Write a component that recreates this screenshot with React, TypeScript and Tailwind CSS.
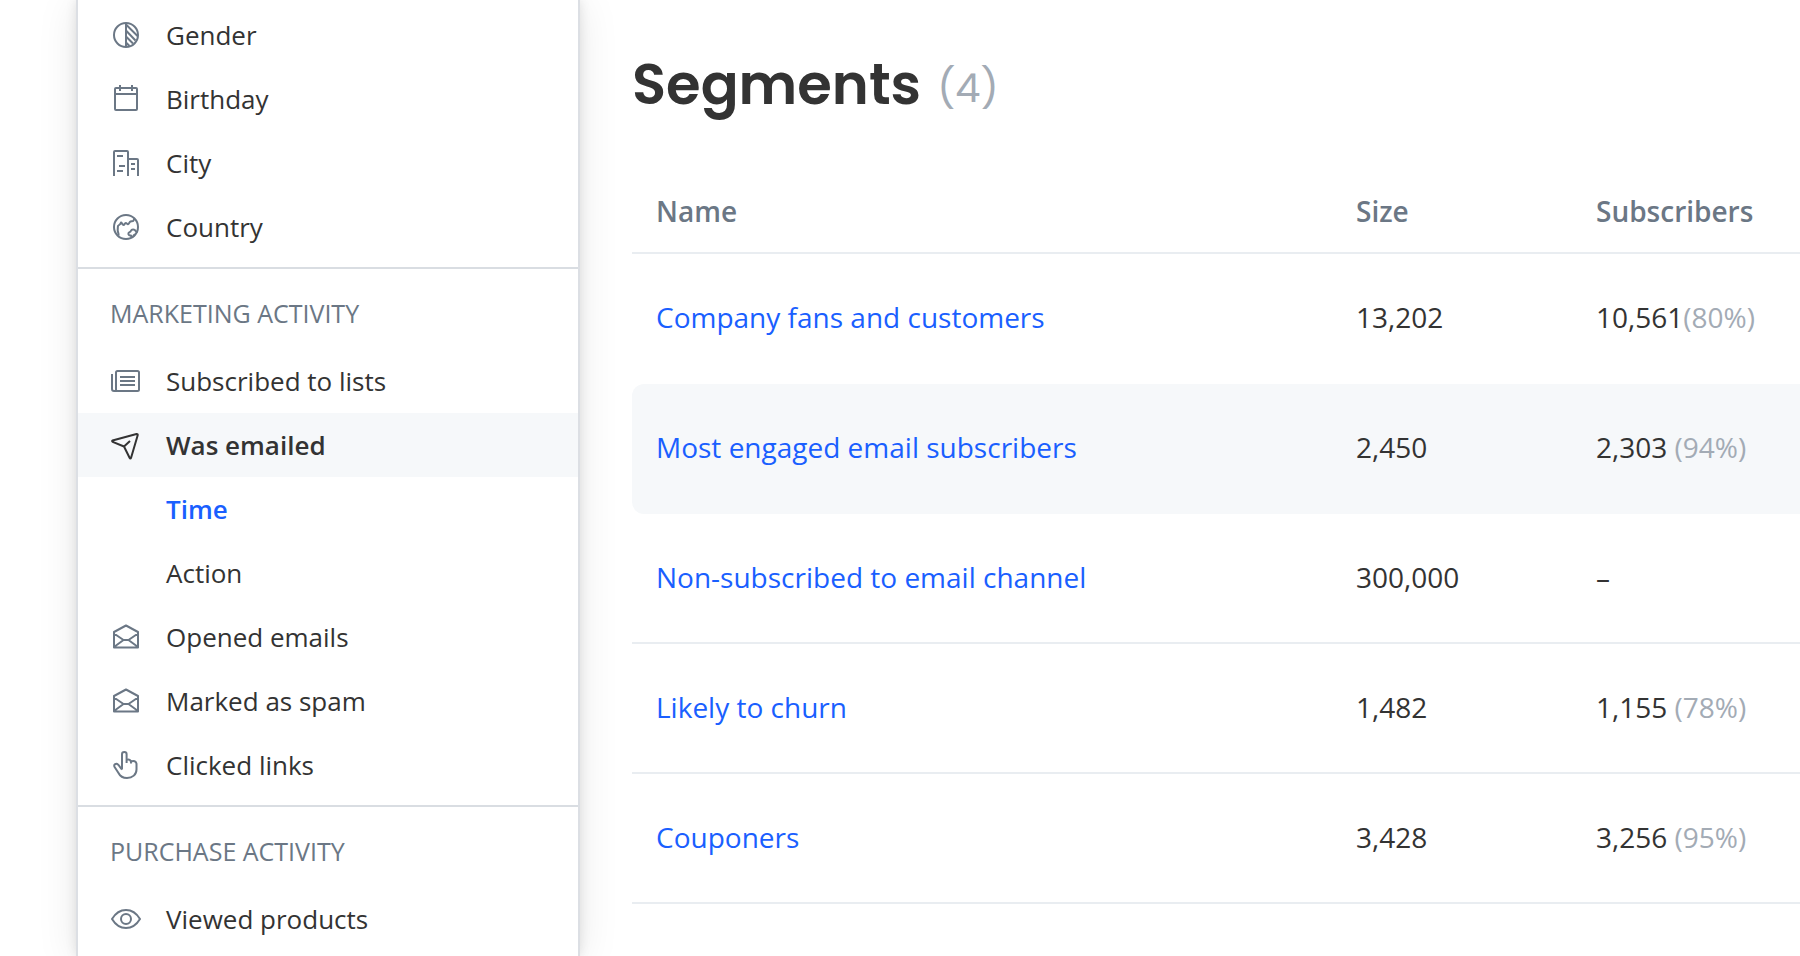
import type { ReactNode } from "react";

function Icon({ children }: { children: ReactNode }) {
  return (
    <svg
      viewBox="0 0 32 32"
      className="size-8 shrink-0"
      fill="none"
      stroke="currentColor"
      strokeWidth="2"
      strokeLinejoin="round"
      aria-hidden="true"
    >
      {children}
    </svg>
  );
}

const GenderIcon = () => (
  <Icon>
    <circle cx="16" cy="16" r="12" />
    <path d="M16 4v24M16 5.500 27.500 17M16 11.500 25.500 21.500M16 17.500l7 7M16 23.500l3.500 3.500" />
  </Icon>
);

const CalendarIcon = () => (
  <Icon>
    <rect x="5" y="5" width="22" height="22" rx="1" />
    <path d="M5 11h22M10 2v6M22 2v6" />
  </Icon>
);

const CityIcon = () => (
  <Icon>
    <path d="M4 29V5a1 1 0 0 1 1-1h12a1 1 0 0 1 1 1v24M18 12h9a1 1 0 0 1 1 1v16M7 9h6M9 19h6M7 24h6M21 17h4M21 22h4" />
  </Icon>
);

const GlobeIcon = () => (
  <Icon>
    <circle cx="16" cy="16" r="12" />
    <path d="M8.500 24.500c.5-2.500-1-3.500-.8-5.500.2-1.500 0-3 .3-4 .5-1.200 2.500-1 3-3.500 1.200.5 1.300 2.500 2.500 2.500s1-2 2.200-2 1.300 1.300 2.300 1.200c1.500-.2 1-2.200 2.500-2.700l2.500-.500c1-.5.7-2 2-2.500" />
    <path d="M21.500 26.500l-.5-2c-2 .3-3-1-2.500-2.500.4-1 2-.8 2.300-2 .7-1.800 3.700-2 4.700-.2.4.9 1 1.200 2 1.200M23.500 26c-.3-1.200.2-2 1.500-2.500" />
  </Icon>
);

const ListIcon = () => (
  <Icon>
    <rect x="6" y="6" width="23" height="20" rx="1.500" />
    <path d="M2 9v15a2 2 0 0 0 2 2h3M10 12h15M10 16h15M10 20h15" />
  </Icon>
);

const SendIcon = () => (
  <Icon>
    <path d="M2.500 11.500 26.500 5c.9-.2 1.400.3 1.200 1.200L21 29c-.3.800-1 .800-1.300 0L14 17.500 2.700 12.800c-.7-.4-.8-1.100-.2-1.300ZM14 17.500l6-5.500" />
  </Icon>
);

const MailOpenIcon = () => (
  <Icon>
    <path d="M4 11 16 4.500 28 11v15.500H4ZM4 12.500l9.500 6.500h5L28 12.500M4 26l9.500-7M28 26l-9.500-7" />
  </Icon>
);

const PointerIcon = () => (
  <Icon>
    <path d="M12 20.500V5.200a2.300 2.300 0 0 1 4.600 0V14M16.600 11c2.400-1 4.400 0 4.400 2.500v1M21 12.500c2.500-1.200 5.500-.3 5.500 2.500v5.500c0 5-4 8.500-9.500 8.500-4.500 0-7-2-8.500-5L4.600 18c-1.300-2.500 1.600-4.300 3.400-2.500 1.600 1.500 2.200 3.500 4 5" />
  </Icon>
);

const EyeIcon = () => (
  <Icon>
    <path d="M2 16c3.500-5.800 8.500-9 14-9s10.500 3.200 14 9c-3.500 5.800-8.500 9-14 9S5.500 21.800 2 16Z" />
    <circle cx="16" cy="16" r="5" />
  </Icon>
);

function NavItem({
  label,
  icon,
  tone = "text-[#333333]",
  active = false,
}: {
  label: string;
  icon?: ReactNode;
  tone?: string;
  active?: boolean;
}) {
  return (
    <li>
      <a
        href="#"
        className={`flex h-16 items-center gap-6 px-8 text-[26px] ${tone} ${active ? "bg-[#f6f8fa]" : ""}`}
      >
        <span className={`size-8 shrink-0 ${active ? "text-[#333333]" : "text-[#6b7785]"}`}>{icon}</span>
        {label}
      </a>
    </li>
  );
}

function NavSection({ title, children }: { title?: string; children: ReactNode }) {
  return (
    <section className="border-b-2 border-[#d9dde2] pb-2 last:border-b-0">
      {title && (
        <h2 className="flex h-20 items-center px-8 pt-2.5 text-[25px] text-[#6b7785]">{title}</h2>
      )}
      <ul>{children}</ul>
    </section>
  );
}

const segments = [
  { name: "Company fans and customers", size: "13,202", subscribers: "10,561", share: "(80%)", line: false },
  { name: "Most engaged email subscribers", size: "2,450", subscribers: "2,303 ", share: "(94%)", line: false, highlighted: true },
  { name: "Non-subscribed to email channel", size: "300,000", subscribers: "–", share: "", line: true },
  { name: "Likely to churn", size: "1,482", subscribers: "1,155 ", share: "(78%)", line: true },
  { name: "Couponers", size: "3,428", subscribers: "3,256 ", share: "(95%)", line: true },
];

export default function App() {
  return (
    <div className="flex h-screen overflow-hidden bg-white pl-[78px] font-['Open_Sans',sans-serif] text-[#333333]">
      <nav
        aria-label="Segment conditions"
        className="w-[500px] shrink-0 self-stretch bg-white pt-[3px] shadow-[0_0_0_2px_#dcdfe4,0_0_12px_rgba(0,0,0,0.14),0_4px_40px_rgba(0,0,0,0.1)]"
      >
        <NavSection>
          <NavItem label="Gender" icon={<GenderIcon />} />
          <NavItem label="Birthday" icon={<CalendarIcon />} />
          <NavItem label="City" icon={<CityIcon />} />
          <NavItem label="Country" icon={<GlobeIcon />} />
        </NavSection>
        <NavSection title="MARKETING ACTIVITY">
          <NavItem label="Subscribed to lists" icon={<ListIcon />} />
          <NavItem label="Was emailed" icon={<SendIcon />} tone="font-semibold text-[#333333]" active />
          <NavItem label="Time" tone="font-semibold text-[#1a5fff]" />
          <NavItem label="Action" />
          <NavItem label="Opened emails" icon={<MailOpenIcon />} />
          <NavItem label="Marked as spam" icon={<MailOpenIcon />} />
          <NavItem label="Clicked links" icon={<PointerIcon />} />
        </NavSection>
        <NavSection title="PURCHASE ACTIVITY">
          <NavItem label="Viewed products" icon={<EyeIcon />} />
        </NavSection>
      </nav>

      <main className="min-w-0 flex-1 pt-11 pl-[54px]">
        <h1 className="flex h-[82px] items-center gap-4 font-[Poppins,Inter,sans-serif] text-[56px] leading-none font-semibold">
          Segments
          <span className="pt-1.5 text-[40px] font-normal text-[#a3abb5]">(4)</span>
        </h1>
        <table className="mt-[46px] w-full table-fixed border-separate border-spacing-0 text-left text-[28px]">
          <thead>
            <tr className="text-[#6b7785]">
              <th scope="col" className="h-[82px] w-[700px] border-b-2 border-[#e9edf1] px-6 pb-0.5 font-semibold">Name</th>
              <th scope="col" className="w-60 border-b-2 border-[#e9edf1] px-6 pb-0.5 font-semibold">Size</th>
              <th scope="col" className="border-b-2 border-[#e9edf1] pb-0.5 pl-6 font-semibold">Subscribers</th>
            </tr>
          </thead>
          <tbody>
            {segments.map((s) => {
              const cell = `h-[130px] border-b-2 pb-0.5 pl-6 ${s.line ? "border-[#e9edf1]" : "border-transparent"} ${s.highlighted ? "bg-[#f6f8fa]" : ""}`;
              return (
                <tr key={s.name}>
                  <td className={`${cell} ${s.highlighted ? "rounded-l-xl" : ""}`}>
                    <a href="#" className="text-[#1a5fff]">{s.name}</a>
                  </td>
                  <td className={cell}>{s.size}</td>
                  <td className={`${cell} whitespace-nowrap`}>
                    {s.subscribers}
                    <span className="text-[#a3abb5]">{s.share}</span>
                  </td>
                </tr>
              );
            })}
          </tbody>
        </table>
      </main>
    </div>
  );
}
